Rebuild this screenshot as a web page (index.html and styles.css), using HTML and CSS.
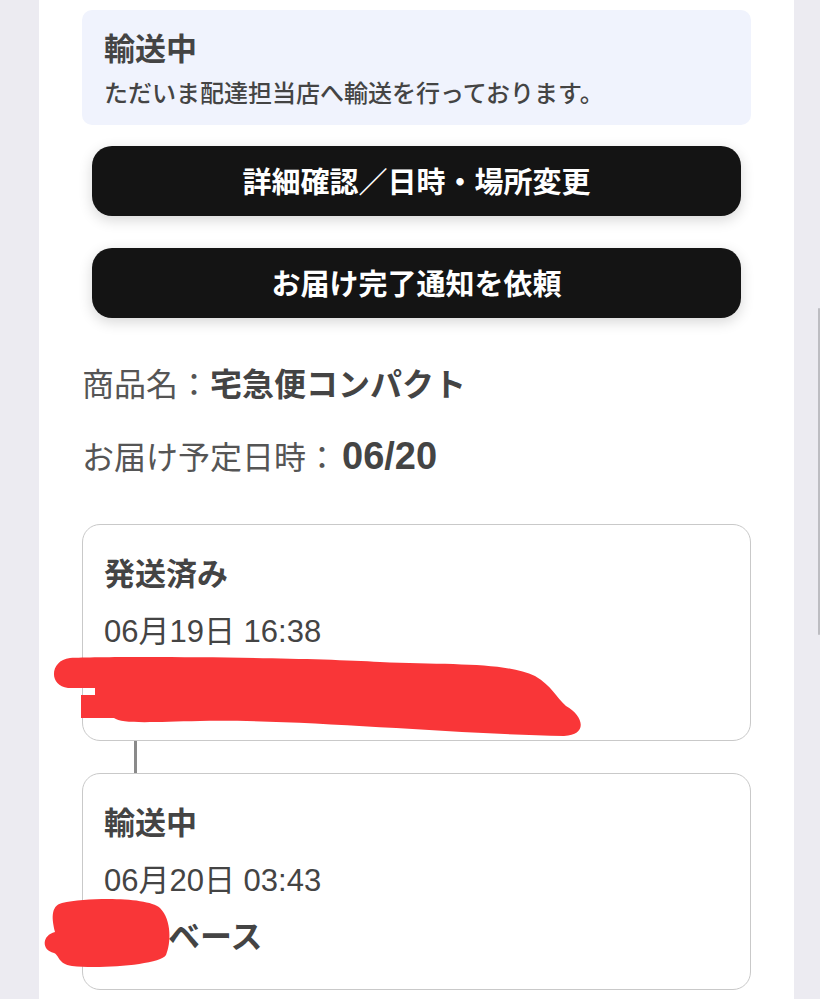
FILE: index.html
```html
<!DOCTYPE html>
<html lang="ja">
<head>
<meta charset="utf-8">
<title>配送状況</title>
<link rel="stylesheet" href="styles.css">
</head>
<body>
<div class="page">
  <div class="status-box">
    <div class="status-title">輸送中</div>
    <div class="status-text">ただいま配達担当店へ輸送を行っております。</div>
  </div>
  <div class="actions">
    <button class="btn">詳細確認／日時・場所変更</button>
    <button class="btn">お届け完了通知を依頼</button>
  </div>
  <div class="info">
    <div class="info-row"><span class="label">商品名：</span><span class="value">宅急便コンパクト</span></div>
    <div class="info-row"><span class="label">お届け予定日時：</span><span class="value num">06/20</span></div>
  </div>
  <div class="timeline">
    <div class="card">
      <div class="card-title">発送済み</div>
      <div class="card-date">06月19日 16:38</div>
      <div class="card-place">〇〇〇〇〇〇〇〇〇〇〇〇〇</div>
    </div>
    <div class="connector"></div>
    <div class="card">
      <div class="card-title">輸送中</div>
      <div class="card-date">06月20日 03:43</div>
      <div class="card-place">〇〇ベース</div>
    </div>
  </div>
</div>
<svg class="redact" width="820" height="999" viewBox="0 0 820 999" aria-hidden="true">
  <path fill="#f93638" d="M 70 658 C 110 656, 300 657, 380 662 C 450 665, 505 662, 535 676 C 552 686, 556 697, 566 706 C 584 716, 588 735, 564 736 C 450 734, 300 719, 200 721 C 150 722, 122 724, 114 718 L 81 718 L 81 695 L 95 695 L 95 688 L 68 688 C 48 686, 50 660, 70 658 Z"/>
  <path fill="#f93638" d="M 62 903 C 90 897, 148 897, 160 908 C 172 920, 171 944, 166 955 C 160 965, 100 969, 72 966 C 58 964, 60 956, 54 953 C 41 950, 42 935, 55 932 C 52 920, 50 906, 62 903 Z"/>
</svg>
<div class="scroll-indicator"></div>
</body>
</html>
```
FILE: styles.css
```css
* { box-sizing: border-box; }
html, body { margin: 0; padding: 0; }
body {
  background: #ecebf1;
  font-family: "Liberation Sans", "Noto Sans CJK JP", sans-serif;
  color: #444;
  width: 820px;
  height: 999px;
  overflow: hidden;
  position: relative;
}
.page {
  margin-left: 39px;
  width: 755px;
  min-height: 999px;
  background: #fff;
  padding: 10px 43px 0 43px;
}
.status-box {
  background: #f0f3fd;
  border-radius: 10px;
  padding: 22px 22px 15px 22px;
  height: 115px;
}
.status-title {
  font-size: 31px;
  font-weight: 700;
  line-height: 36px;
  color: #444;
}
.status-text {
  margin-top: 10px;
  font-size: 24px;
  font-weight: 500;
  line-height: 32px;
  color: #444;
}
.actions {
  display: flex;
  flex-direction: column;
  gap: 32px;
  padding: 0 10px;
  margin-top: 21px;
}
.btn {
  display: block;
  width: 100%;
  height: 70px;
  border: none;
  border-radius: 20px;
  background: #141414;
  color: #fff;
  font-family: "Liberation Sans", "Noto Sans CJK JP", sans-serif;
  font-size: 29px;
  font-weight: 700;
  box-shadow: 0 4px 14px rgba(0, 0, 0, 0.16);
  padding: 0 0 3px 0;
}
.info {
  margin-top: 32px;
}
.info-row {
  font-size: 32px;
  line-height: 71px;
}
.label {
  color: #555;
  font-weight: 400;
}
.value {
  color: #444;
  font-weight: 700;
}
.num {
  font-size: 38px;
  margin-left: 4px;
}
.timeline {
  margin-top: 30px;
}
.card {
  border: 1px solid #c9c9c9;
  border-radius: 18px;
  height: 217px;
  padding: 21px 22px 0 21px;
}
.card-title {
  font-size: 31px;
  font-weight: 700;
  line-height: 57px;
}
.card-date {
  font-size: 31px;
  font-weight: 400;
  line-height: 57px;
}
.card-place {
  font-size: 32px;
  font-weight: 700;
  line-height: 57px;
}
.connector {
  margin-left: 52px;
  width: 3px;
  height: 32px;
  background: #8a8a8a;
}
.redact {
  position: absolute;
  top: 0;
  left: 0;
  pointer-events: none;
}
.scroll-indicator {
  position: absolute;
  left: 818px;
  top: 308px;
  width: 2px;
  height: 327px;
  background: #bdbdc2;
  border-radius: 1px;
}
```
